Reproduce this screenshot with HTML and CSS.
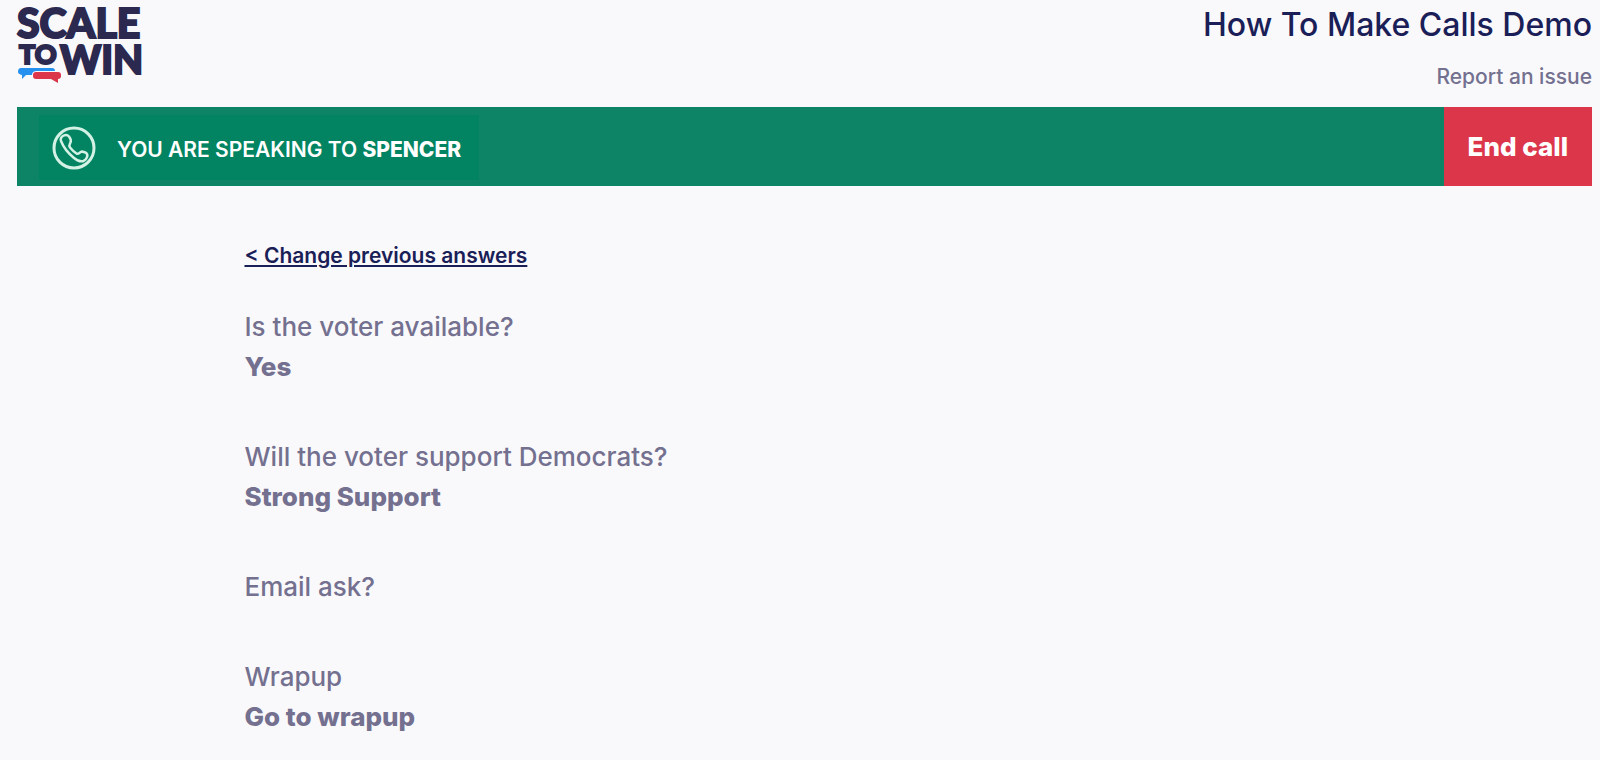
FILE: index.html
```html
<!DOCTYPE html>
<html lang="en">
<head>
<meta charset="utf-8">
<meta name="viewport" content="width=device-width, initial-scale=1">
<title>How To Make Calls Demo</title>
<link rel="stylesheet" href="styles.css">
</head>
<body>
<div class="page">
  <header class="header">
    <svg class="logo" viewBox="0 0 126 80" role="img" aria-label="Scale to Win">
      <text class="logo-text logo-large" x="0" y="33">SCALE</text>
      <text class="logo-text logo-small" x="2" y="59">TO</text>
      <text class="logo-text logo-win" x="43" y="69">WIN</text>
      <path fill="#2590ee" d="M4 63H35Q38 63 38 66H20Q15 66 15 70V70H9L5 74V70Q1 69 1 67Q1 63 4 63Z"/>
      <path fill="#dc364b" d="M19 67H41Q44 67 44 70V71Q44 74 41 74V78L34 74H19Q16 74 16 71V70Q16 67 19 67Z"/>
    </svg>
    <div class="heading">
      <h1 class="title">How To Make Calls Demo</h1>
      <a class="report" href="#">Report an issue</a>
    </div>
  </header>

  <section class="callbar" aria-label="Current call">
    <div class="status">
      <svg class="phone" viewBox="0 0 44 44" fill="none" stroke="currentColor" aria-hidden="true">
        <circle cx="22" cy="22" r="20" stroke-width="3"/>
        <path stroke-width="2.5" stroke-linejoin="round" d="M9 15C7.500 10.500 14 7 17 10.500C18.500 12.500 19.500 14.500 18.500 16.500C17.500 18.500 16.500 19 18 21.500C20 24 22 26 24.500 27.500C27 29 27.500 25.500 30 25.500L33.500 26.500C37 28.500 35 33.500 31.500 35C28.500 36 25 34.500 22 32C16 27 11.500 21.500 9 15Z"/>
      </svg>
      <p class="speaking">YOU ARE SPEAKING TO <strong>SPENCER</strong></p>
    </div>
    <button class="end-call" type="button">End call</button>
  </section>

  <main class="content">
    <a class="change" href="#">&lt; Change previous answers</a>
    <dl class="answers">
      <div><dt>Is the voter available?</dt><dd>Yes</dd></div>
      <div><dt>Will the voter support Democrats?</dt><dd>Strong Support</dd></div>
      <div><dt>Email ask?</dt></div>
      <div><dt>Wrapup</dt><dd>Go to wrapup</dd></div>
    </dl>
  </main>
</div>
</body>
</html>
```

FILE: styles.css
```css
* {
  box-sizing: border-box;
}

body {
  margin: 0;
  background: #f9f9fc;
  color: #74708f;
  font-family: Inter, "Liberation Sans", sans-serif;
}

.page {
  padding: 5px 8px 0 17px;
}

.header {
  display: flex;
  justify-content: space-between;
  align-items: flex-start;
  padding-bottom: 15px;
}

.logo {
  width: 126px;
  height: 80px;
  overflow: visible;
}

.logo-text {
  fill: #2b294f;
  stroke: #2b294f;
  stroke-width: 2px;
  font-family: Lato, sans-serif;
  font-weight: 900;
}

.logo-large {
  font-size: 41px;
}

.logo-win {
  font-size: 39px;
}

.logo-small {
  font-size: 27px;
}

.heading {
  display: flex;
  flex-direction: column;
  align-items: flex-end;
  gap: 17px;
}

.title {
  margin: 0;
  color: #1a2057;
  font-size: 32px;
  font-weight: 500;
  line-height: 40px;
}

.report {
  color: #74708f;
  font-size: 21px;
  font-weight: 500;
  line-height: 30px;
  text-decoration: none;
}

.callbar {
  display: flex;
  justify-content: space-between;
  min-height: 79px;
  padding-left: 22px;
  background: #0c8465;
}

.status {
  display: flex;
  align-items: center;
  gap: 21px;
  margin: 8px 0 6px;
  padding: 0 18px 0 13px;
  background: #028462;
  color: #fff;
}

.phone {
  width: 44px;
  height: 44px;
  color: #d3f2e5;
}

.speaking {
  margin: 0;
  padding-top: 4px;
  font-size: 21px;
  font-weight: 600;
  line-height: 30px;
}

.speaking strong {
  font-weight: 800;
}

.end-call {
  padding: 0 24px;
  border: 0;
  background: #dc364b;
  color: #fff;
  font: 800 26px/40px Inter, "Liberation Sans", sans-serif;
  cursor: pointer;
}

.content {
  max-width: 1150px;
  margin: 0 auto;
  padding: 55px 15px 0;
}

.change {
  color: #1a2057;
  font-size: 21px;
  font-weight: 600;
  line-height: 30px;
  text-decoration-thickness: 2px;
  text-underline-offset: 2px;
}

.answers {
  display: flex;
  flex-direction: column;
  gap: 50px;
  margin: 36px 0 0;
  font-size: 26px;
  line-height: 40px;
}

.answers dt {
  font-weight: 500;
}

.answers dd {
  margin: 0;
  font-weight: 800;
}
```
